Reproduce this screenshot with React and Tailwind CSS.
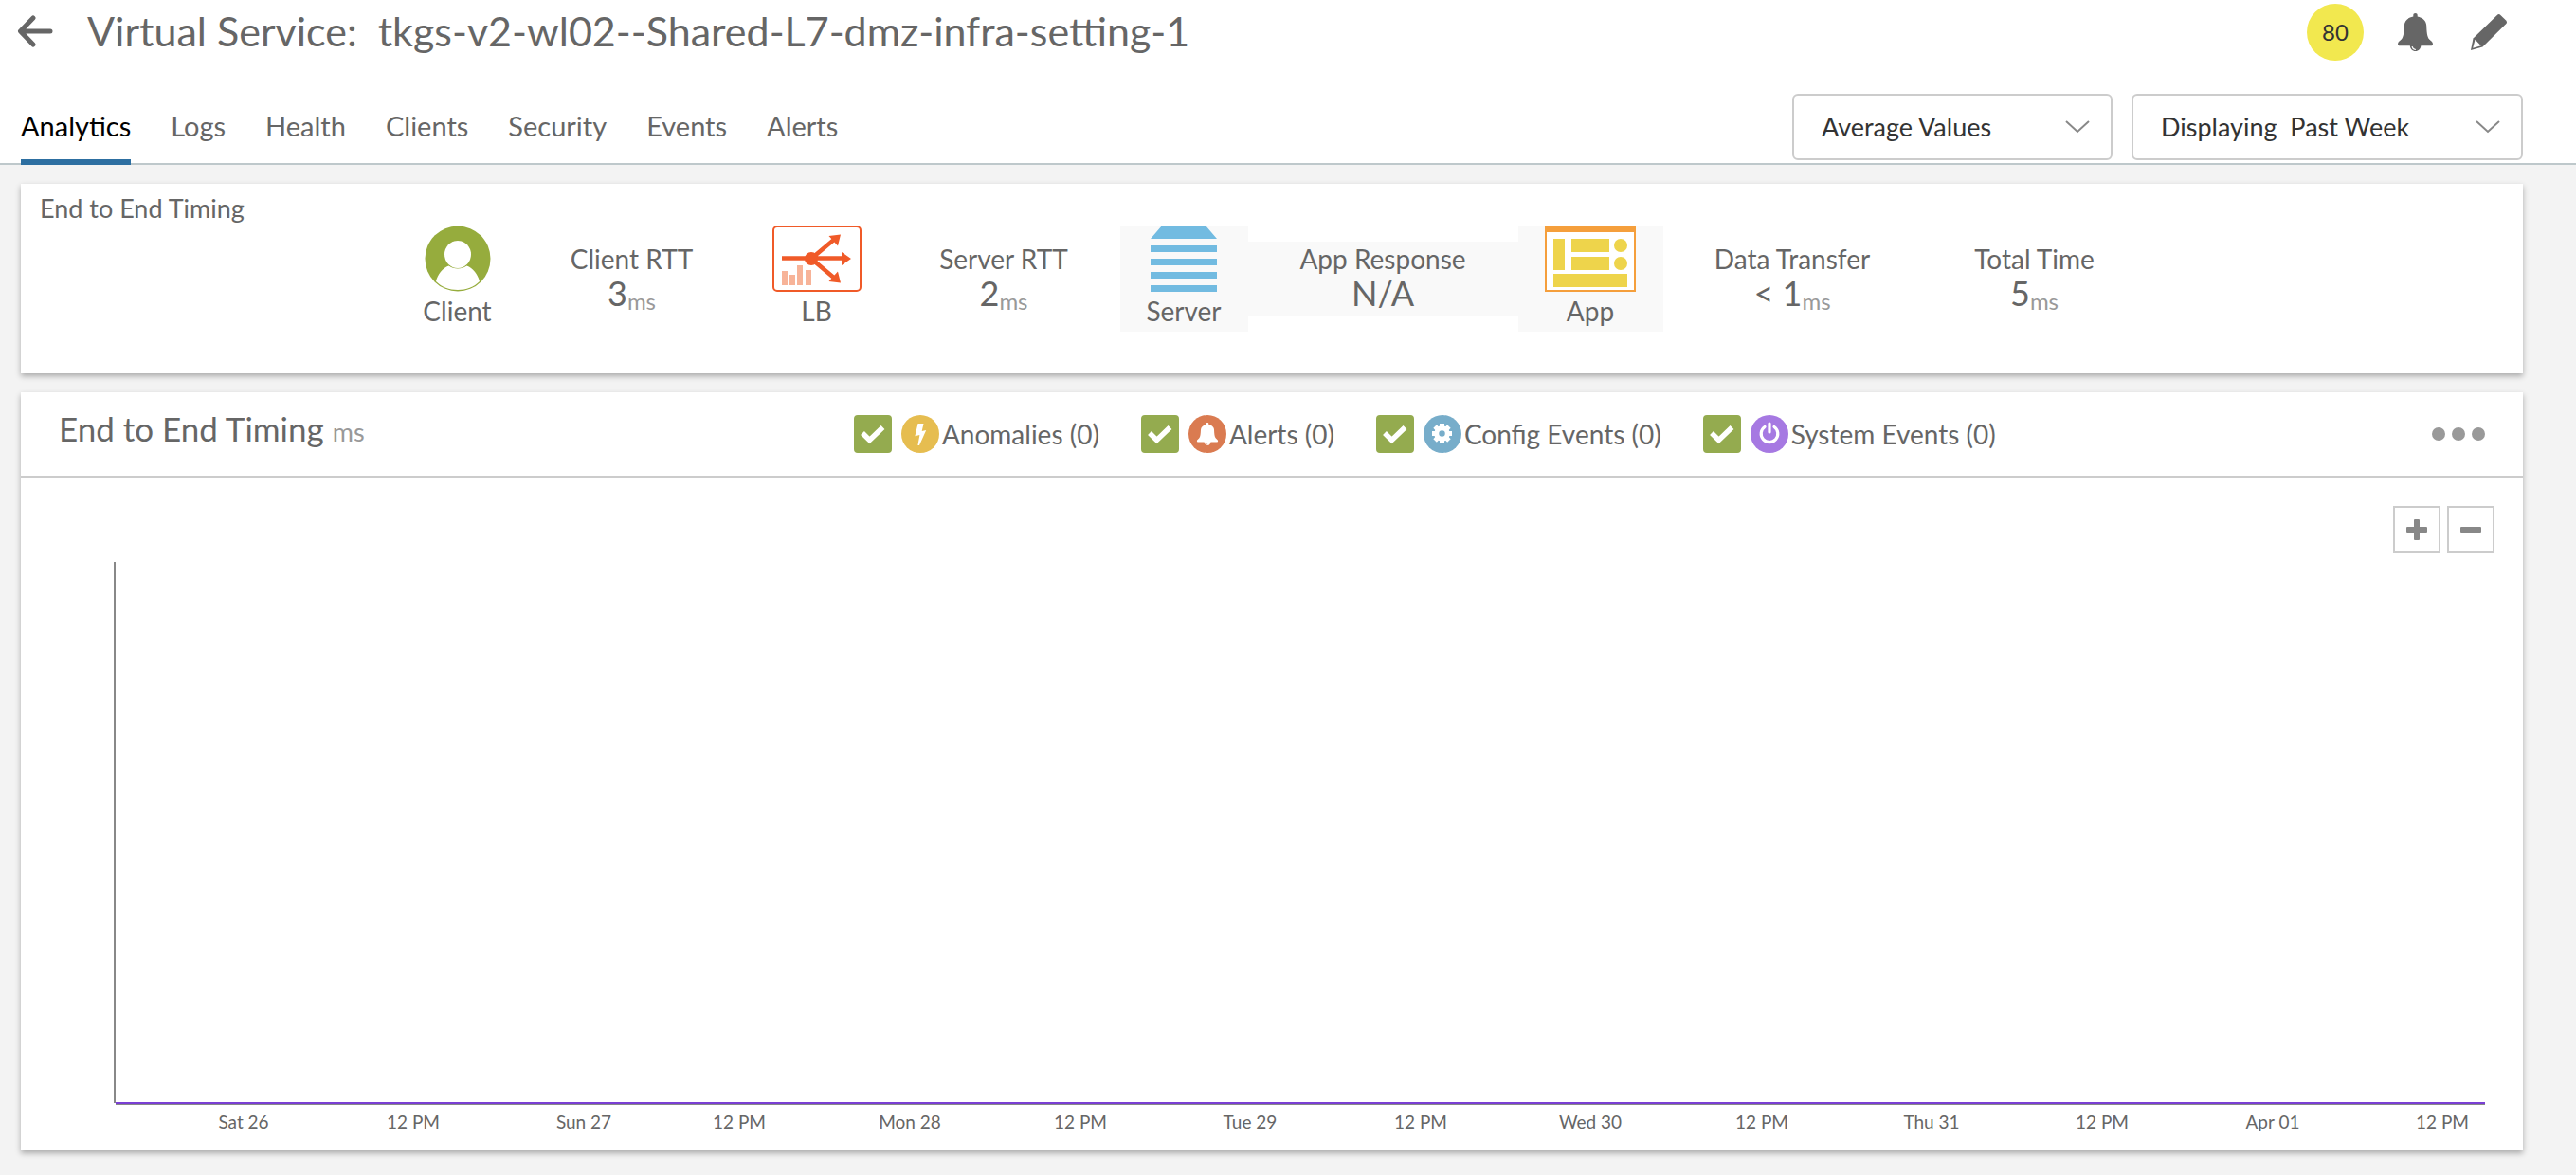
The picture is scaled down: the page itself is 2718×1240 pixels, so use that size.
import { useState } from "react";

const TABS = ["Analytics", "Logs", "Health", "Clients", "Security", "Events", "Alerts"];

const TICKS = [
  ["Sat 26", "5.4%"],
  ["12 PM", "12.56%"],
  ["Sun 27", "19.76%"],
  ["12 PM", "26.32%"],
  ["Mon 28", "33.52%"],
  ["12 PM", "40.72%"],
  ["Tue 29", "47.88%"],
  ["12 PM", "55.08%"],
  ["Wed 30", "62.24%"],
  ["12 PM", "69.48%"],
  ["Thu 31", "76.64%"],
  ["12 PM", "83.84%"],
  ["Apr 01", "91.04%"],
  ["12 PM", "98.2%"],
];

function BellShape({ fill, shine }) {
  return (
    <g>
      <path
        fill={fill}
        d="M18.500 0c1.400 0 2.200.9 2.200 2.200v1.300c5.300.9 9.300 4.500 9.500 9.500.3 6.500.6 12 3 14.500 1.800 1.800 3.800 2.800 3.800 4.900 0 1.300-.9 1.800-2.200 1.800H2.200C.9 34.200 0 33.700 0 32.400c0-2.100 2-3.100 3.800-4.900 2.400-2.500 2.700-8 3-14.500.2-5 4.200-8.600 9.500-9.500V2.200C16.300.9 17.100 0 18.500 0z"
      />
      <path fill={fill} d="M12.800 33.500h11.600c0 4-2.500 6.500-5.800 6.500s-5.800-2.500-5.800-6.500z" />
      <path d="M15.200 35.500c.4 1.600 1.500 2.700 3.100 2.900" fill="none" stroke={shine} strokeWidth="1.200" strokeLinecap="round" />
    </g>
  );
}

function BackArrow() {
  return (
    <svg width="38" height="34" viewBox="0 0 38 34" fill="none" stroke="#666" strokeWidth="5" strokeLinecap="round" strokeLinejoin="round">
      <path d="M35 17H4M17 3 3.500 17 17 31" />
    </svg>
  );
}

function PencilIcon() {
  return (
    <svg width="38" height="38" viewBox="0 0 38 38">
      <path d="M27.800.9a2.600 2.600 0 0 1 3.600 0l5.700 5.700a2.600 2.600 0 0 1 0 3.600L12.500 34.600 0 38l2.500-12.500z" fill="#666" />
      <path d="M4.500 26.800 10.800 33.200 2.200 35.700z" fill="#fff" />
    </svg>
  );
}

function Chevron() {
  return (
    <svg className="pointer-events-none absolute right-6 top-7" width="26" height="14" viewBox="0 0 26 14" fill="none" stroke="#888" strokeWidth="2">
      <path d="M1 1l12 11L25 1" />
    </svg>
  );
}

function Dropdown({ label, value, className }) {
  return (
    <div className={"relative " + className}>
      <select
        aria-label={label}
        className="block h-[70px] w-full appearance-none rounded-md border-2 border-[#ccc] bg-white pl-[29px] pr-16 text-[27px] leading-9 text-[#333]"
      >
        <option>{value}</option>
      </select>
      <Chevron />
    </div>
  );
}

function ClientIcon() {
  return (
    <svg width="70" height="70" viewBox="0 0 70 70">
      <circle cx="35" cy="35" r="34.500" fill="#96ac3d" />
      <path d="M12 59c2-8 7-14 13.500-16.500 5 4 14 4 19 0C51 45 56 51 58 59c-6 6-14 9-23 9s-17-3-23-9z" fill="#fff" />
      <ellipse cx="35" cy="30.500" rx="14" ry="14.500" fill="#fff" />
    </svg>
  );
}

function LbIcon() {
  return (
    <svg width="94" height="70" viewBox="0 0 94 70">
      <rect x="1" y="1" width="92" height="68" rx="4" fill="#fff" stroke="#f05a28" strokeWidth="2" />
      <g fill="#f7b398">
        <path d="M10 48h6v15h-6zM18 52h6v11h-6zM26 42h6v21h-6zM35 47h6v16h-6z" />
      </g>
      <circle cx="41" cy="35" r="7" fill="#f05a28" />
      <g stroke="#f05a28" strokeWidth="4.500" fill="none">
        <path d="M10 34.500h66M41 35l25-21M41 35l25 21" />
      </g>
      <g fill="#f05a28">
        <path d="M83 35 73 28v14zM72 9.500 59.500 11l9.500 10.500zM72 60.500 59.500 59 69 48.500z" />
      </g>
    </svg>
  );
}

function ServerIcon() {
  return (
    <svg width="70" height="70" viewBox="0 0 70 70" fill="#72bbe1">
      <path d="M12 0h46l12 14H0zM0 21h70v7H0zM0 35h70v7H0zM0 49h70v7H0zM0 63h70v7H0z" />
    </svg>
  );
}

function AppIcon() {
  return (
    <svg width="96" height="70" viewBox="0 0 96 70">
      <rect x="1" y="1" width="94" height="68" fill="#fff" stroke="#f59f3c" strokeWidth="2" />
      <path d="M0 0h96v7H0z" fill="#f59f3c" />
      <g fill="#eed44b">
        <path d="M9 14h12v33H9zM28 14h40v14H28zM28 33h40v14H28zM9 51h78v14H9z" />
        <circle cx="80" cy="21" r="7" />
        <circle cx="80" cy="40" r="7" />
      </g>
    </svg>
  );
}

function Node({ icon, label, className = "" }) {
  return (
    <div className={"flex h-28 flex-col items-center " + className}>
      {icon}
      <span className="mt-1 text-[28px] leading-8">{label}</span>
    </div>
  );
}

function Metric({ label, value, unit, className = "" }) {
  return (
    <div className={"mt-[17px] flex h-[78px] flex-col items-center gap-0.5 " + className}>
      <span className="text-[28px] leading-9">{label}</span>
      <span className="flex items-baseline text-4xl leading-8">
        {value}
        {unit && <span className="relative top-1 text-2xl leading-8 text-[#999]">{unit}</span>}
      </span>
    </div>
  );
}

const EVENT_ICONS = {
  anomaly: (
    <svg width="40" height="40" viewBox="0 0 40 40">
      <circle cx="20" cy="20" r="20" fill="#e6bd50" />
      <path d="M17.500 9h6l-1.800 8 4.500-1-7.200 16h-1.600l2-11-5 1.200z" fill="#fff" />
    </svg>
  ),
  alert: (
    <svg width="40" height="40" viewBox="0 0 40 40">
      <circle cx="20" cy="20" r="20" fill="#da7b51" />
      <g transform="translate(8.900 8) scale(.6)">
        <BellShape fill="#fff" shine="#da7b51" />
      </g>
    </svg>
  ),
  config: (
    <svg width="40" height="40" viewBox="0 0 40 40">
      <circle cx="20" cy="20" r="20" fill="#77adca" />
      <circle cx="19.500" cy="19.500" r="5.750" fill="none" stroke="#fff" strokeWidth="5" />
      <g stroke="#fff" strokeWidth="5">
        <path d="M19.500 9v4M19.500 26v4M9 19.500h4M26 19.500h4M12.100 12.100l2.800 2.800M24.100 24.100l2.800 2.800M12.100 26.900l2.800-2.800M24.100 14.900l2.800-2.800" />
      </g>
    </svg>
  ),
  system: (
    <svg width="40" height="40" viewBox="0 0 40 40">
      <circle cx="20" cy="20" r="20" fill="#a679e2" />
      <path d="M15 12.500a8.800 8.800 0 1 0 10 0M20 9v9" fill="none" stroke="#fff" strokeWidth="3.200" strokeLinecap="round" />
    </svg>
  ),
};

function EventToggle({ kind, label }) {
  const [on, setOn] = useState(true);
  return (
    <label className="flex items-center">
      <span className="relative mr-2.5 size-10">
        <input
          type="checkbox"
          checked={on}
          onChange={() => setOn(!on)}
          className="block size-10 appearance-none rounded border-2 border-[#94ab4f] checked:bg-[#94ab4f]"
        />
        <svg className="pointer-events-none absolute inset-0" width="40" height="40" viewBox="0 0 40 40" fill="none" stroke="#fff" strokeWidth="5.500">
          <path d="M9 19 16.500 26.500 30.500 13" />
        </svg>
      </span>
      {EVENT_ICONS[kind]}
      <span className="ml-[3px] text-[28px] leading-10">{label}</span>
    </label>
  );
}

export default function App() {
  return (
    <div className="min-h-screen bg-[#f3f3f3] pb-6 font-['Lato',sans-serif] text-[#666]">
      <header className="border-b-2 border-[#bec8cb] bg-white">
        <div className="flex h-[99px] items-start justify-between pl-[18px] pr-[73px]">
          <div className="flex items-center pt-2">
            <button aria-label="Back">
              <BackArrow />
            </button>
            <h1 className="ml-9 whitespace-pre text-[43px] leading-[50px]">
              Virtual Service:  tkgs-v2-wl02--Shared-L7-dmz-infra-setting-1
            </h1>
          </div>
          <div className="flex items-center pt-1">
            <span className="flex size-[60px] items-center justify-center rounded-full bg-[#f2e84f] text-2xl text-[#333]">80</span>
            <button aria-label="Alerts" className="ml-9">
              <svg className="block" width="37" height="40" viewBox="0 0 37 40">
                <BellShape fill="#666" shine="#fff" />
              </svg>
            </button>
            <button aria-label="Edit" className="ml-10">
              <PencilIcon />
            </button>
          </div>
        </div>
        <div className="flex h-[73px] items-start justify-between pl-[22px] pr-14">
          <nav className="-mb-[2px] flex h-[75px] gap-[42px] self-start text-[29px] leading-9">
            {TABS.map((t, i) => (
              <a
                key={t}
                href={"#" + t.toLowerCase()}
                className={
                  i === 0
                    ? "h-[75px] border-b-[6px] border-[#2d6fa1] pt-4 text-black"
                    : "h-[75px] pt-4"
                }
              >
                {t}
              </a>
            ))}
          </nav>
          <div className="flex gap-5">
            <Dropdown label="Value type" value="Average Values" className="w-[338px]" />
            <Dropdown label="Time range" value={"Displaying\u00a0 Past Week"} className="w-[413px]" />
          </div>
        </div>
      </header>

      <main className="mt-5 flex flex-col gap-5 pl-[22px] pr-14">
        <section className="relative h-[200px] bg-white pt-11 shadow-[0_3px_6px_rgba(0,0,0,0.3)]">
          <h2 className="absolute left-5 top-2 text-[27px] leading-9">End to End Timing</h2>
          <div className="flex justify-center">
            <Node icon={<ClientIcon />} label="Client" className="w-32" />
            <Metric label="Client RTT" value="3" unit="ms" className="w-60" />
            <Node icon={<LbIcon />} label="LB" className="w-[150px]" />
            <Metric label="Server RTT" value="2" unit="ms" className="w-[245px]" />
            <Node icon={<ServerIcon />} label="Server" className="w-[135px] bg-[#f9f9f9]" />
            <Metric label="App Response" value="N/A" className="w-[285px] bg-[#f9f9f9]" />
            <Node icon={<AppIcon />} label="App" className="w-[153px] bg-[#f9f9f9]" />
            <Metric label="Data Transfer" value="< 1" unit="ms" className="w-[273px]" />
            <Metric label="Total Time" value="5" unit="ms" className="w-[238px]" />
          </div>
        </section>

        <section className="bg-white pb-4 shadow-[0_3px_6px_rgba(0,0,0,0.3)]">
          <div className="grid h-[90px] grid-cols-[13fr_auto_8fr] items-center border-b-2 border-[#ccc] pl-10 pr-10">
            <h2 className="pb-2 text-[35px] leading-10">
              End to End Timing <span className="text-[27px] text-[#999]">ms</span>
            </h2>
            <div className="flex items-center gap-11">
              <EventToggle kind="anomaly" label="Anomalies (0)" />
              <EventToggle kind="alert" label="Alerts (0)" />
              <EventToggle kind="config" label="Config Events (0)" />
              <EventToggle kind="system" label="System Events (0)" />
            </div>
            <button aria-label="More options" className="flex gap-[7px] justify-self-end">
              <span className="size-3.5 rounded-full bg-[#999]" />
              <span className="size-3.5 rounded-full bg-[#999]" />
              <span className="size-3.5 rounded-full bg-[#999]" />
            </button>
          </div>
          <div className="flex justify-end gap-[7px] pr-[30px] pt-[30px]">
            <button aria-label="Zoom in" className="flex size-[50px] items-center justify-center border-2 border-[#ccc]">
              <svg width="22" height="22" viewBox="0 0 22 22" fill="#888">
                <rect x="0" y="8" width="22" height="6" rx="1" />
                <rect x="8" y="0" width="6" height="22" rx="1" />
              </svg>
            </button>
            <button aria-label="Zoom out" className="flex size-[50px] items-center justify-center border-2 border-[#ccc]">
              <svg width="22" height="22" viewBox="0 0 22 22" fill="#888">
                <rect x="0" y="8" width="22" height="6" rx="1" />
              </svg>
            </button>
          </div>
          <div className="pl-[98px] pr-[42px] pt-[9px]">
            <svg className="block w-full overflow-visible" height="605" role="img" aria-label="End to end timing chart">
              <rect x="0" y="0" width="2" height="571" fill="#888" />
              <g transform="translate(2 0)">
                <rect x="0" y="572" width="100%" height="1" fill="#888" />
                <rect x="0" y="570" width="100%" height="2" fill="#7a3fd4" />
                {TICKS.map(([t, x]) => (
                  <text key={x} x={x} y="598" textAnchor="middle" className="fill-[#666] text-[19px]">
                    {t}
                  </text>
                ))}
              </g>
            </svg>
          </div>
        </section>
      </main>
    </div>
  );
}
